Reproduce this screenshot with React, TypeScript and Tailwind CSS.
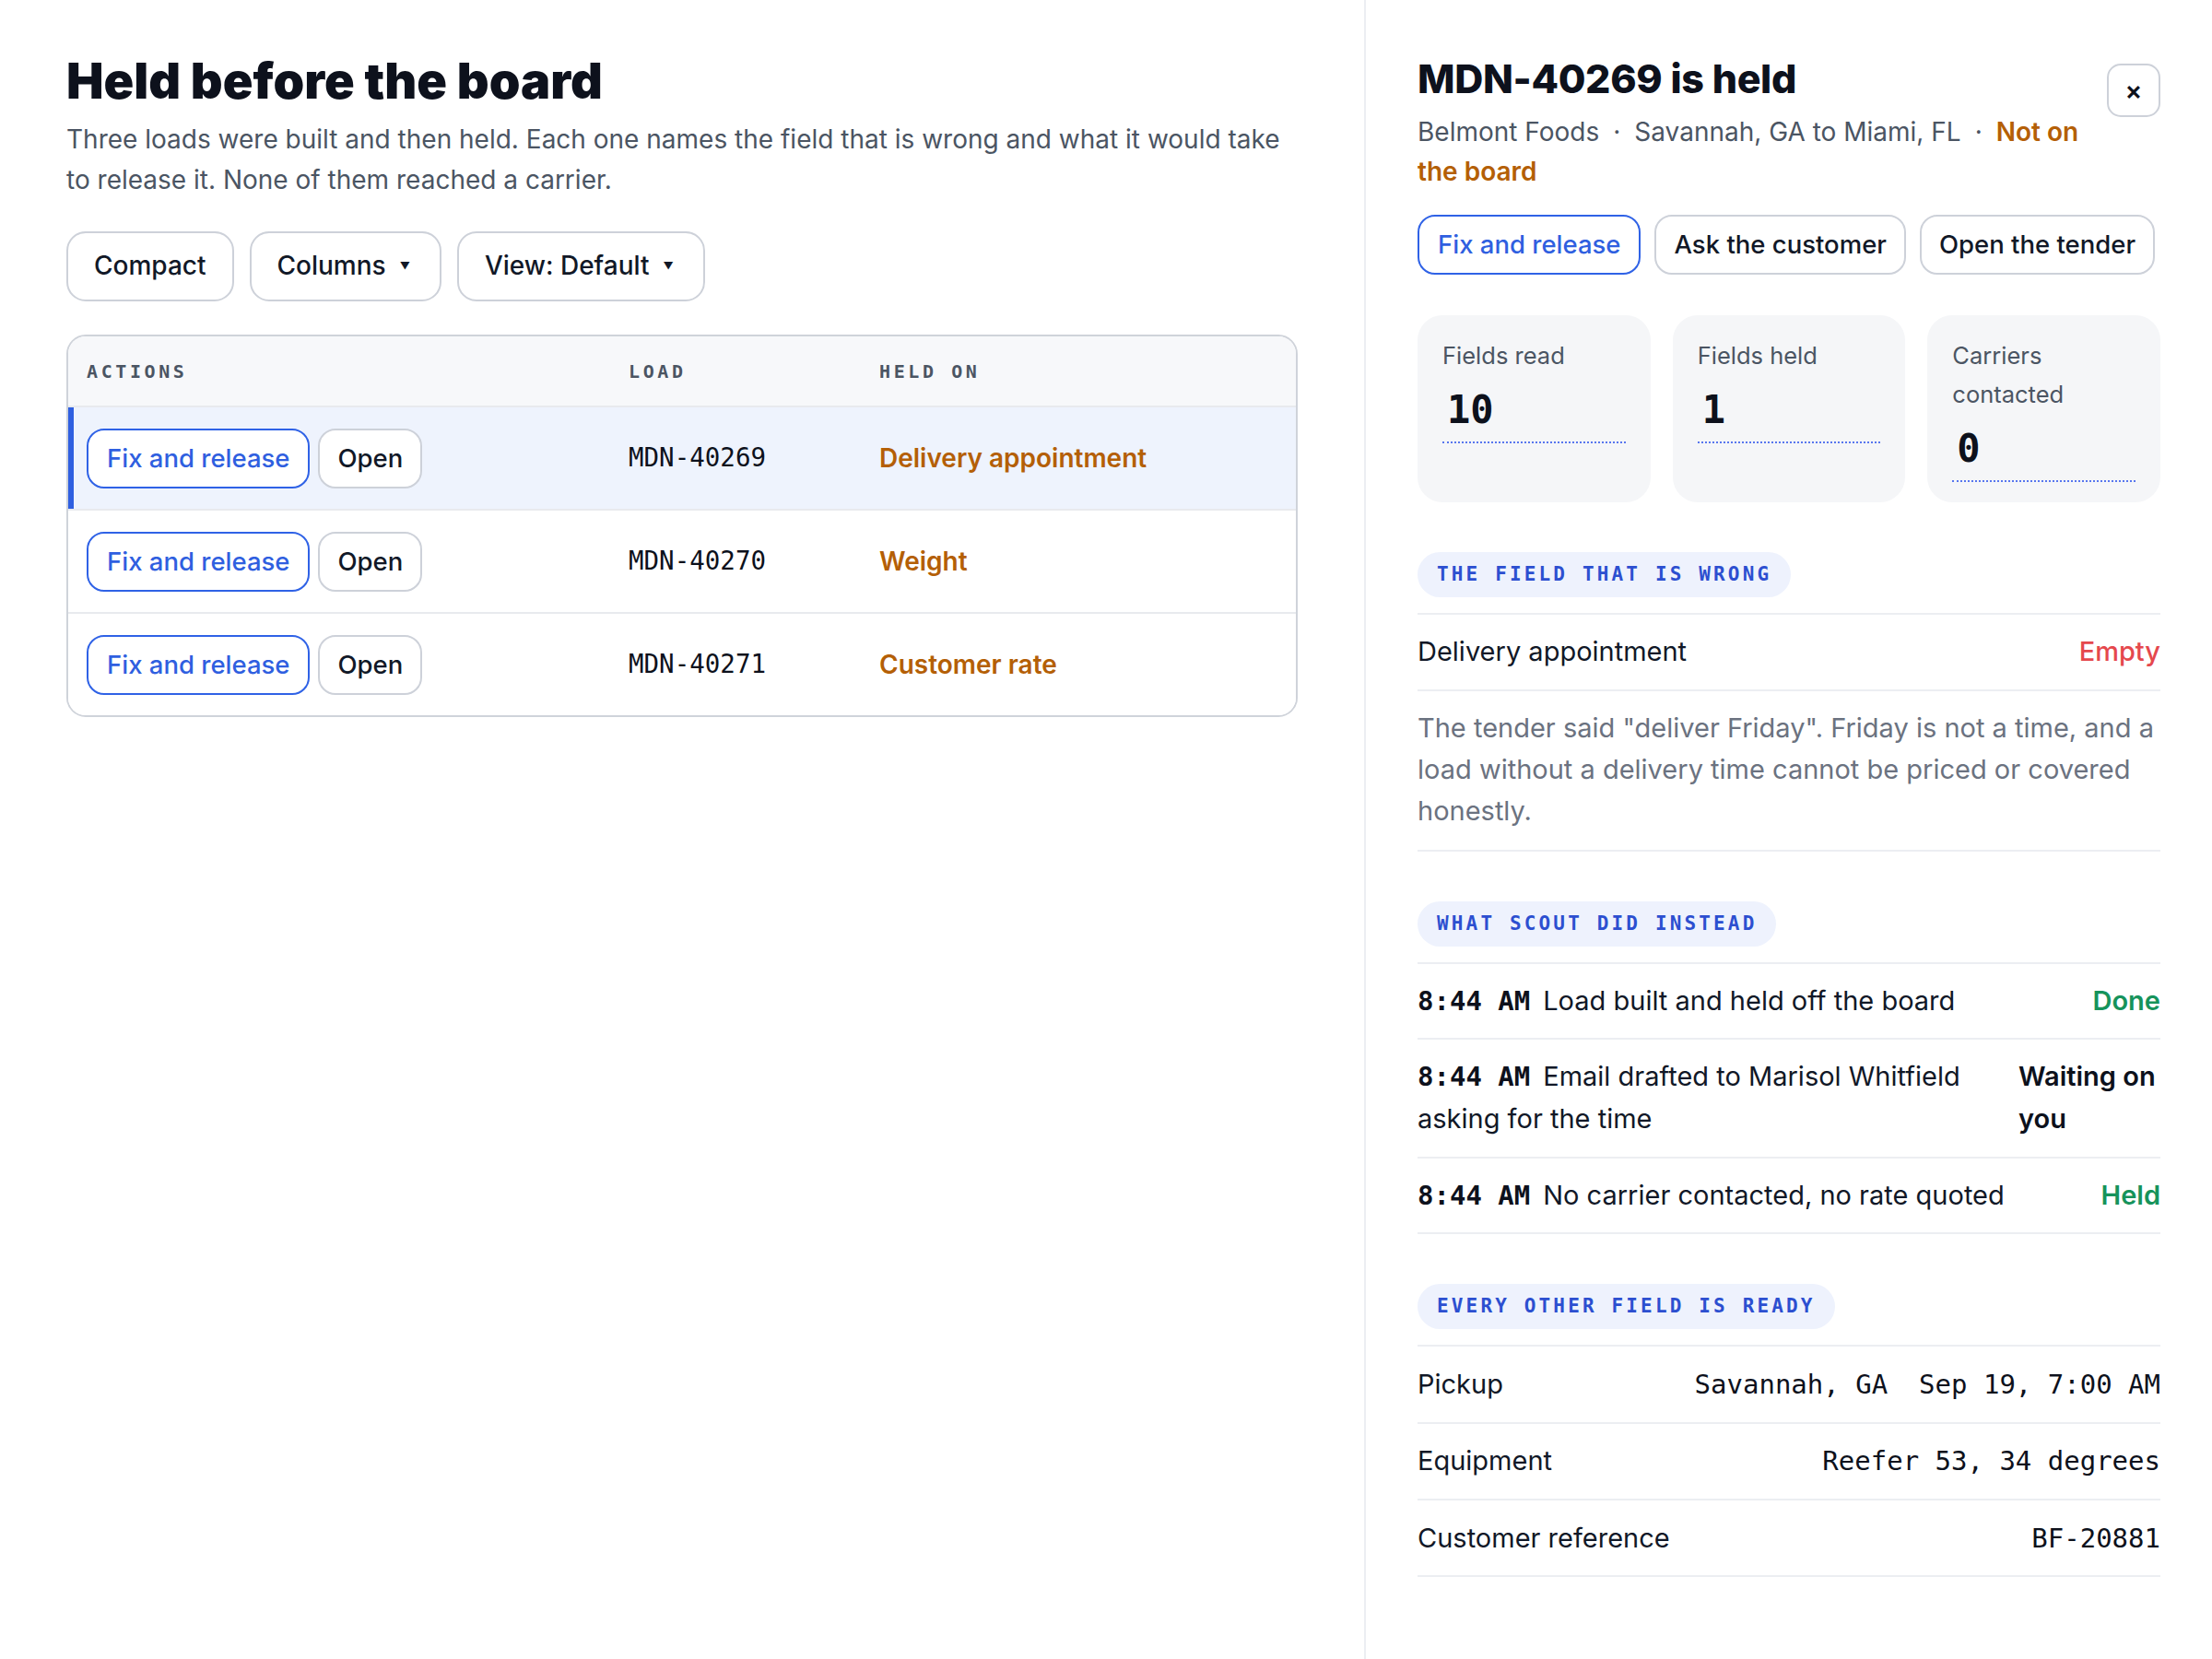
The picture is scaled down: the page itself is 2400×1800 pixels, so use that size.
import { ReactNode } from 'react'

const mono = "font-['DejaVu_Sans_Mono',monospace]"

const loads = [
  { id: 'MDN-40269', field: 'Delivery appointment', active: true },
  { id: 'MDN-40270', field: 'Weight', active: false },
  { id: 'MDN-40271', field: 'Customer rate', active: false },
]

const timeline = [
  { time: '8:44 AM', text: 'Load built and held off the board', status: 'Done', tone: 'green' },
  {
    time: '8:44 AM',
    text: 'Email drafted to Marisol Whitfield asking for the time',
    status: 'Waiting on you',
    tone: 'dark',
  },
  { time: '8:44 AM', text: 'No carrier contacted, no rate quoted', status: 'Held', tone: 'green' },
]

function Caret() {
  return <span className="ml-[15px] mr-[4px] text-[11px] leading-none">▼</span>
}

function ToolButton({ children }: { children: ReactNode }) {
  return (
    <button className="flex items-center whitespace-nowrap rounded-[21px] border-2 border-[#cdd1d9] bg-white px-[28px] py-[14.5px] text-[28px] font-medium leading-[43px] text-[#111827]">
      {children}
    </button>
  )
}

function PillButton({ children, primary }: { children: ReactNode; primary?: boolean }) {
  return (
    <button
      className={
        primary
          ? 'shrink-0 whitespace-nowrap rounded-[19px] border-2 border-[#2f62e6] bg-white px-[20px] py-[9px] text-[27.5px] font-medium leading-[43px] text-[#2f5fe0]'
          : 'shrink-0 whitespace-nowrap rounded-[19px] border-2 border-[#cdd1d9] bg-white px-[19px] py-[9px] text-[27.5px] font-medium leading-[43px] text-[#111827]'
      }
    >
      {children}
    </button>
  )
}

function Stat({ label, value }: { label: string; value: string }) {
  return (
    <div className="rounded-[27px] bg-[#f5f6f8] px-[27px] pt-[23px] pb-[22px]">
      <div className="text-[25.5px] leading-[42px] text-[#4b5563]">{label}</div>
      <div
        className={`${mono} mt-[13px] border-b-2 border-dotted border-[#5876ee] pb-[9px] pl-[5px] text-[42px] font-bold leading-[1.2] text-[#0d111c]`}
      >
        {value}
      </div>
    </div>
  )
}

function SectionPill({ children }: { children: ReactNode }) {
  return (
    <div
      className={`${mono} inline-block rounded-full bg-[#eef2fd] px-[21px] py-[7px] text-[21px] font-bold uppercase leading-[35px] tracking-[0.15em] text-[#2c4fd0]`}
    >
      {children}
    </div>
  )
}

export default function App() {
  return (
    <div className="flex min-h-[1800px] bg-white font-['Inter',sans-serif] text-[#111827]">
      <main className="min-w-0 flex-1 px-[72px] pt-[56px]">
        <h1 className="text-[54px] font-black leading-[1.2] text-[#0d111c]">Held before the board</h1>
        <p className="mt-[9.5px] text-[28px] leading-[43.4px] text-[#4b5563]">
          Three loads were built and then held. Each one names the field that is wrong and what it would take to
          release it. None of them reached a carrier.
        </p>

        <div className="mt-[33.5px] flex gap-[17px]">
          <ToolButton>Compact</ToolButton>
          <ToolButton>
            Columns
            <Caret />
          </ToolButton>
          <ToolButton>
            View: Default
            <Caret />
          </ToolButton>
        </div>

        <div className="mt-[36.5px] overflow-hidden rounded-[21px] border-2 border-[#cfd3da]">
          <div
            className={`${mono} grid grid-cols-[588px_272px_1fr] border-b-2 border-[#e8eaee] bg-[#f7f8fa] text-[20px] font-bold uppercase leading-[34px] tracking-[0.18em] text-[#4b5563]`}
          >
            <div className="px-[20px] py-[20.5px]">Actions</div>
            <div className="px-[20px] py-[20.5px]">Load</div>
            <div className="px-[20px] py-[20.5px]">Held on</div>
          </div>
          {loads.map((load, i) => (
            <div
              key={load.id}
              className={
                'grid grid-cols-[588px_272px_1fr] items-center ' +
                (i < loads.length - 1 ? 'border-b-2 border-[#e8eaee] ' : '') +
                (load.active ? 'bg-[#eef3fd] shadow-[inset_6px_0_0_#2f5fe0]' : 'bg-white')
              }
            >
              <div className="flex gap-[9px] px-[20px] py-[22.5px]">
                <PillButton primary>Fix and release</PillButton>
                <PillButton>Open</PillButton>
              </div>
              <div className={`${mono} px-[20px] text-[27.5px] text-[#0d111c]`}>{load.id}</div>
              <div className="px-[20px] text-[28px] font-semibold text-[#b45f06]">{load.field}</div>
            </div>
          ))}
        </div>
      </main>

      <aside className="w-[920px] shrink-0 border-l-2 border-[#eceef2] px-[56px] pt-[60px] pb-[60px]">
        <div className="flex items-start justify-between gap-[24px]">
          <div className="min-w-0">
            <h2 className="text-[43px] font-extrabold leading-[1.2] tracking-[-0.008em] text-[#0d111c]">
              MDN-40269 is held
            </h2>
            <p className="mt-[10px] text-[28px] leading-[43.35px] text-[#4b5563]">
              Belmont Foods
              <span className="mx-[15px]">·</span>
              Savannah, GA to Miami, FL
              <span className="mx-[15px]">·</span>
              <span className="font-semibold text-[#b45f06]">Not on the board</span>
            </p>
          </div>
          <button className="mt-[9px] flex h-[58px] w-[58px] shrink-0 items-center justify-center rounded-[15px] border-2 border-[#cdd1d9] text-[28px] font-semibold leading-none text-[#0d111c]">
            ×
          </button>
        </div>

        <div className="mt-[24.5px] flex gap-[15px]">
          <PillButton primary>Fix and release</PillButton>
          <PillButton>Ask the customer</PillButton>
          <PillButton>Open the tender</PillButton>
        </div>

        <div className="mt-[44px] grid grid-cols-3 gap-[24px]">
          <Stat label="Fields read" value="10" />
          <Stat label="Fields held" value="1" />
          <Stat label="Carriers contacted" value="0" />
        </div>

        <section className="mt-[54px]">
          <SectionPill>The field that is wrong</SectionPill>
          <div className="mt-[17px] border-t-2 border-[#eceef2] text-[29px] leading-[46.4px]">
            <div className="flex justify-between border-b-2 border-[#eceef2] py-[17px]">
              <span>Delivery appointment</span>
              <span className="font-medium text-[#e5484d]">Empty</span>
            </div>
            <p className="border-b-2 border-[#eceef2] pt-[17px] pb-[20px] leading-[45px] text-[#6b7280]">
              The tender said "deliver Friday". Friday is not a time, and a load without a delivery time cannot be
              priced or covered honestly.
            </p>
          </div>
        </section>

        <section className="mt-[54px]">
          <SectionPill>What Scout did instead</SectionPill>
          <div className="mt-[17px] border-t-2 border-[#eceef2] text-[29px] leading-[46.4px]">
            {timeline.map((item, i) => (
              <div key={i} className="flex justify-between gap-[24px] border-b-2 border-[#eceef2] py-[17px]">
                <div>
                  <span className={`${mono} mr-[14px] font-bold text-[#0d111c]`}>{item.time}</span>
                  {item.text}
                </div>
                <div
                  className={
                    'max-w-[154px] shrink-0 font-semibold ' +
                    (item.tone === 'green' ? 'text-[#16935b]' : 'text-[#0d111c]')
                  }
                >
                  {item.status}
                </div>
              </div>
            ))}
          </div>
        </section>

        <section className="mt-[54px]">
          <SectionPill>Every other field is ready</SectionPill>
          <div className="mt-[17px] border-t-2 border-[#eceef2] text-[29px] leading-[46.4px]">
            <div className="flex items-center justify-between border-b-2 border-[#eceef2] py-[17.5px]">
              <span>Pickup</span>
              <span className={`${mono} flex gap-[34px] text-[#0d111c]`}>
                <span>Savannah, GA</span>
                <span>Sep 19, 7:00 AM</span>
              </span>
            </div>
            <div className="flex items-center justify-between border-b-2 border-[#eceef2] py-[17.5px]">
              <span>Equipment</span>
              <span className={`${mono} text-[#0d111c]`}>Reefer 53, 34 degrees</span>
            </div>
            <div className="flex items-center justify-between border-b-2 border-[#eceef2] py-[17.5px]">
              <span>Customer reference</span>
              <span className={`${mono} text-[#0d111c]`}>BF-20881</span>
            </div>
          </div>
        </section>
      </aside>
    </div>
  )
}
